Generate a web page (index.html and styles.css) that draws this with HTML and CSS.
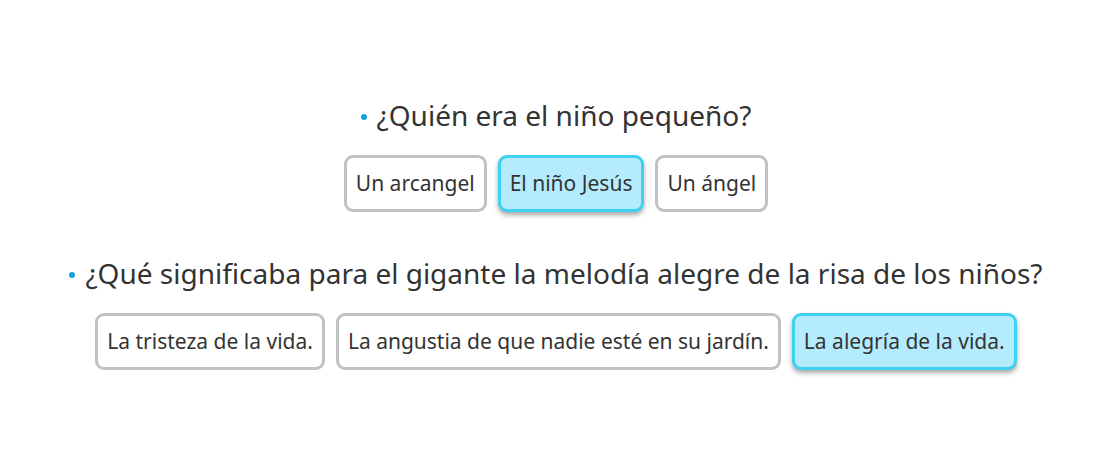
FILE: index.html
```html
<!DOCTYPE html>
<html lang="es">
<head>
<meta charset="utf-8">
<link rel="stylesheet" href="styles.css">
</head>
<body>
<main class="quiz">
  <section class="question">
    <h2 class="prompt"><span class="dot"></span>¿Quién era el niño pequeño?</h2>
    <div class="options">
      <button class="option">Un arcangel</button>
      <button class="option selected">El niño Jesús</button>
      <button class="option">Un ángel</button>
    </div>
  </section>
  <section class="question">
    <h2 class="prompt"><span class="dot"></span>¿Qué significaba para el gigante la melodía alegre de la risa de los niños?</h2>
    <div class="options">
      <button class="option">La tristeza de la vida.</button>
      <button class="option">La angustia de que nadie esté en su jardín.</button>
      <button class="option selected">La alegría de la vida.</button>
    </div>
  </section>
</main>
</body>
</html>
```
FILE: styles.css
```css
html, body {
  margin: 0;
  background: #ffffff;
}
body {
  font-family: "Noto Sans", "Open Sans", sans-serif;
  color: #333333;
  width: 1112px;
  height: 476px;
}
.quiz {
  display: flex;
  flex-direction: column;
  align-items: center;
  padding-top: 97px;
  gap: 43px;
}
.question {
  display: flex;
  flex-direction: column;
  align-items: center;
  gap: 22px;
}
.prompt {
  margin: 0;
  font-weight: 400;
  font-size: 28px;
  line-height: 36px;
  color: #333333;
  display: flex;
  align-items: center;
}
.dot {
  display: inline-block;
  width: 6px;
  height: 6px;
  border-radius: 50%;
  background: #1a9fe0;
  margin-right: 10px;
  position: relative;
  top: 2px;
}
.options {
  display: flex;
  gap: 11px;
}
.option {
  font-family: inherit;
  font-size: 21px;
  color: #333333;
  background: #ffffff;
  border: 3px solid #c2c2c2;
  border-radius: 9px;
  padding: 0 9px;
  height: 57px;
  line-height: 51px;
}
.option.selected {
  background: #b4ebfd;
  border-color: #3dd2f2;
  box-shadow: 0 3px 5px rgba(0, 0, 0, 0.35);
}
```
